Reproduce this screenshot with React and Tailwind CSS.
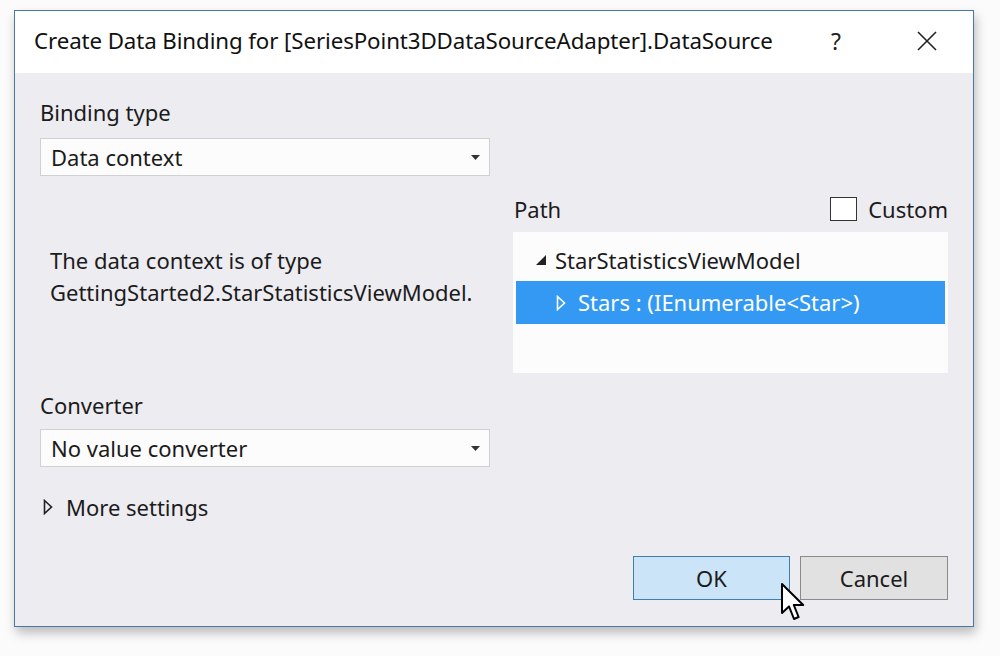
import React from 'react'

const font = { fontFamily: '"Noto Sans", "Open Sans", "Liberation Sans", sans-serif' }

const DropArrow = () => (
    <svg width="9" height="5" viewBox="0 0 9 5" className="shrink-0">
        <polygon points="0,0 9,0 4.5,5" fill="#333" />
    </svg>
)

const OpenTriangle = ({ color }) => (
    <svg width="10" height="16" viewBox="0 0 10 16" className="shrink-0">
        <polygon points="1.5,1.5 8.5,8 1.5,14.5" fill="none" stroke={color} strokeWidth="1.6" />
    </svg>
)

const Select = ({ value }) => (
    <div className="h-[38px] w-[450px] bg-[#fcfcfc] border border-[#cfcfd4] flex items-center justify-between pl-[10px] pr-[9px]">
        <span className="text-[22px] leading-[30px] text-[#1b1b1b]">{value}</span>
        <DropArrow />
    </div>
)

export default function App() {
    return (
        <div className="w-[1000px] h-[656px] bg-[#fbfbfb] pt-[10px] pl-[14px] relative" style={font}>
            {/* Dialog */}
            <div className="w-[960px] h-[617px] border border-[#4a76a8] flex flex-col shadow-[2px_6px_10px_rgba(0,0,0,0.25)]">
                {/* Title bar */}
                <div className="h-[62px] bg-white flex items-center pl-[19px] pb-[2px] shrink-0">
                    <span className="text-[22.3px] text-[#111] tracking-[-0.1px]">
                        Create Data Binding for [SeriesPoint3DDataSourceAdapter].DataSource
                    </span>
                    <span className="ml-auto text-[23px] text-[#222] w-[40px] text-center">?</span>
                    <svg width="22" height="22" viewBox="0 0 22 22" className="ml-[60px] mr-[35px]">
                        <path d="M2 2 L20 20 M20 2 L2 20" stroke="#222" strokeWidth="1.6" />
                    </svg>
                </div>

                {/* Body */}
                <div className="flex-1 bg-[#edecf1] px-[25px] pt-[25px] flex flex-col text-[#1b1b1b]">
                    <div className="flex justify-between">
                        {/* Left column */}
                        <div className="w-[450px] flex flex-col">
                            <div className="text-[22px] leading-[28px] h-[40px]">Binding type</div>
                            <Select value="Data context" />
                            <div className="pl-[10px] mt-[68px] text-[22px] leading-[32px]">
                                The data context is of type<br />
                                GettingStarted2.StarStatisticsViewModel.
                            </div>
                            <div className="text-[22px] leading-[28px] h-[38px] mt-[83px]">Converter</div>
                            <Select value="No value converter" />
                            <div className="flex items-center gap-[13px] mt-[25px] pl-[3px]">
                                <OpenTriangle color="#222" />
                                <span className="text-[22px] leading-[30px]">More settings</span>
                            </div>
                        </div>

                        {/* Right column */}
                        <div className="w-[435px] flex flex-col mt-[92px]">
                            <div className="flex items-center justify-between h-[42px] pb-[4px]">
                                <span className="text-[22px] pl-[1px]">Path</span>
                                <div className="flex items-center gap-[11px]">
                                    <div className="w-[27px] h-[24px] bg-white border border-[#333]" />
                                    <span className="text-[22px]">Custom</span>
                                </div>
                            </div>
                            <div className="h-[141px] bg-[#fcfcfd] pt-[7px] px-[3px]">
                                <div className="h-[42px] flex items-center pl-[20px] gap-[9px]">
                                    <svg width="10" height="10" viewBox="0 0 10 10" className="shrink-0">
                                        <polygon points="10,0 10,10 0,10" fill="#222" />
                                    </svg>
                                    <span className="text-[22px]">StarStatisticsViewModel</span>
                                </div>
                                <div className="h-[43px] bg-[#3399f3] flex items-center pl-[40px] gap-[12px] text-white">
                                    <OpenTriangle color="#fff" />
                                    <span className="text-[22px]">Stars : (IEnumerable&lt;Star&gt;)</span>
                                </div>
                            </div>
                        </div>
                    </div>

                    {/* Buttons */}
                    <div className="flex justify-end gap-[10px] mt-auto mb-[26px]">
                        <div className="w-[157px] h-[44px] bg-[#cce4f7] border border-[#3c7fb1] flex items-center justify-center text-[22px]">
                            OK
                        </div>
                        <div className="w-[148px] h-[44px] bg-[#e1e1e1] border border-[#8a8a8a] flex items-center justify-center text-[22px]">
                            Cancel
                        </div>
                    </div>
                </div>
            </div>

            {/* Mouse cursor */}
            <svg width="28" height="40" viewBox="0 0 14 20" className="absolute left-[780px] top-[582px]">
                <path d="M1 1 L1 15.5 L4.5 12.2 L7 18.5 L9.3 17.5 L6.9 11.5 L11.6 11.5 Z" fill="#fff" stroke="#000" strokeWidth="1" strokeLinejoin="round" />
            </svg>
        </div>
    )
}
